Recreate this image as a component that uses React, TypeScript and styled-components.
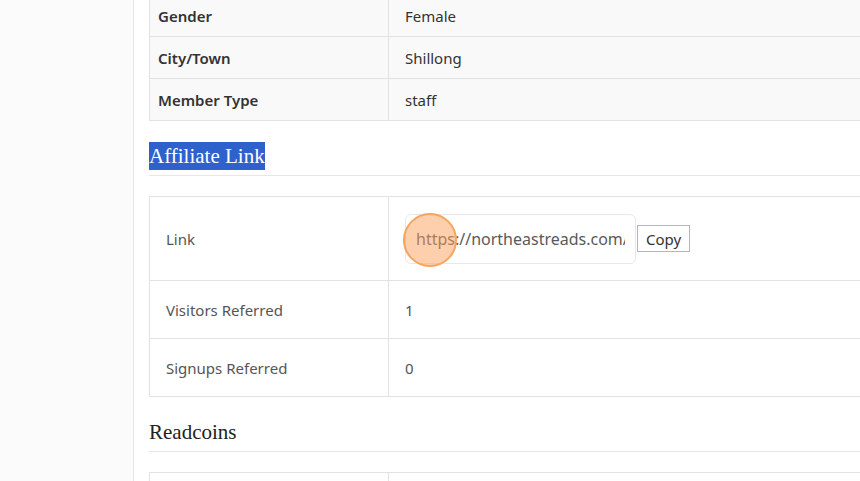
import React from "react";
import styled, { createGlobalStyle } from "styled-components";

const GlobalStyle = createGlobalStyle`
  html, body {
    margin: 0;
    padding: 0;
    background: #ffffff;
    overflow: hidden;
  }
  body {
    font-family: "Noto Sans", "Open Sans", sans-serif;
    color: #333;
  }
`;

const Page = styled.div`
  display: flex;
  width: 100%;
  height: 481px;
  overflow: hidden;
`;

const Sidebar = styled.aside`
  flex: 0 0 133px;
  background: #fbfbfb;
  border-right: 1px solid #e6e6e6;
`;

const Main = styled.main`
  flex: 0 0 760px;
  padding-left: 15px;
`;

const Table = styled.table<{ $shaded?: boolean }>`
  width: 100%;
  border-collapse: collapse;
  background: ${p => (p.$shaded ? "#f9f9f9" : "#ffffff")};
  border-left: 1px solid #e2e2e2;
  &:first-child {
    margin-top: -6px;
  }
`;

const Row = styled.tr`
  border-top: 1px solid #e2e2e2;
  border-bottom: 1px solid #e2e2e2;
`;

const Label = styled.td<{ $bold?: boolean }>`
  box-sizing: border-box;
  width: 239px;
  border-right: 1px solid #e2e2e2;
  padding: ${p => (p.$bold ? "8.5px 8px" : "16.5px 16px")};
  font-size: 15px;
  line-height: 24px;
  font-weight: ${p => (p.$bold ? 600 : 400)};
  color: ${p => (p.$bold ? "#333" : "#555")};
  vertical-align: middle;
`;

const Value = styled.td<{ $bold?: boolean }>`
  padding: ${p => (p.$bold ? "8.5px 16px" : "16.5px 16px")};
  font-size: 15px;
  line-height: 24px;
  color: ${p => (p.$bold ? "#333" : "#555")};
  vertical-align: middle;
`;

const Heading = styled.h3`
  margin: 21px 0 20px;
  padding-bottom: 5px;
  border-bottom: 1px solid #e6e6e6;
  font-family: "Liberation Serif", "DejaVu Serif", serif;
  font-weight: 400;
  font-size: 21px;
  line-height: 28px;
  color: #222;
`;

const Selected = styled.span`
  display: inline-block;
  line-height: 28px;
  background: #2f61cc;
  color: #ffffff;
`;

const LinkBox = styled.div`
  display: flex;
  align-items: center;
  position: relative;
`;

const LinkInput = styled.input`
  width: 231px;
  height: 50px;
  box-sizing: border-box;
  border: 1px solid #e8e8e8;
  border-radius: 6px;
  padding: 0 10px;
  font-family: "Noto Sans", "Open Sans", sans-serif;
  font-size: 16px;
  color: #5a5a5a;
  background: #fff;
  outline: none;
`;

const CopyButton = styled.button`
  height: 27px;
  margin-left: 1px;
  padding: 0 8px;
  border: 1px solid #b5b5b5;
  border-radius: 0;
  background: #fff;
  font-family: "Noto Sans", "Open Sans", sans-serif;
  font-size: 15px;
  color: #333;
`;

// click marker drawn over the start of the field
const ClickDot = styled.span`
  position: absolute;
  left: -2px;
  top: 50%;
  width: 50px;
  height: 50px;
  margin-top: -26px;
  border-radius: 50%;
  border: 2px solid #f6a45e;
  background: rgba(252, 160, 90, 0.5);
  pointer-events: none;
`;

const details = [
  ["Gender", "Female"],
  ["City/Town", "Shillong"],
  ["Member Type", "staff"],
];

const App = () => {
  return (
    <>
      <GlobalStyle />
      <Page>
        <Sidebar />
        <Main>
          <Table $shaded>
            <tbody>
              {details.map(([k, v]) => (
                <Row key={k}>
                  <Label $bold>{k}</Label>
                  <Value $bold>{v}</Value>
                </Row>
              ))}
            </tbody>
          </Table>

          <Heading>
            <Selected>Affiliate Link</Selected>
          </Heading>

          <Table>
            <tbody>
              <Row>
                <Label>Link</Label>
                <Value>
                  <LinkBox>
                    <LinkInput readOnly value="https://northeastreads.com/?ref=staff" />
                    <CopyButton>Copy</CopyButton>
                    <ClickDot />
                  </LinkBox>
                </Value>
              </Row>
              <Row>
                <Label>Visitors Referred</Label>
                <Value>1</Value>
              </Row>
              <Row>
                <Label>Signups Referred</Label>
                <Value>0</Value>
              </Row>
            </tbody>
          </Table>

          <Heading>Readcoins</Heading>

          <Table>
            <tbody>
              <Row>
                <Label>&nbsp;</Label>
                <Value>&nbsp;</Value>
              </Row>
            </tbody>
          </Table>
        </Main>
      </Page>
    </>
  );
};

export default App;
